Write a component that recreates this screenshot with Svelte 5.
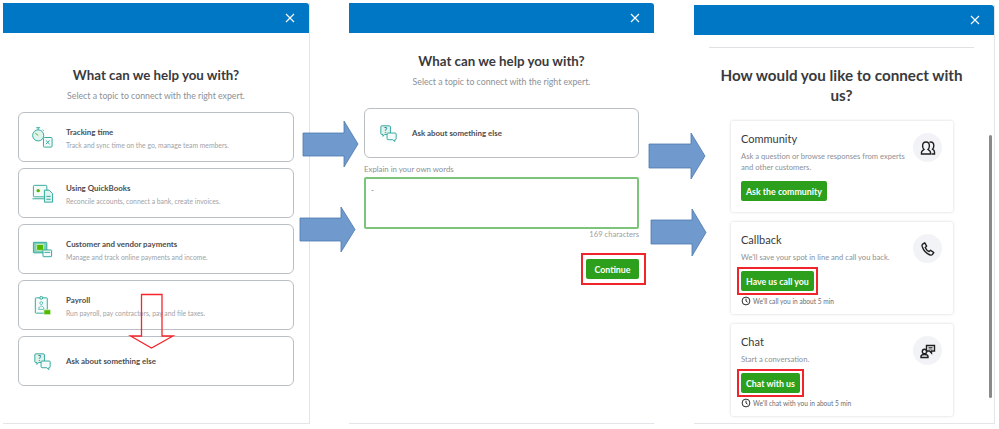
<script>
  const topics = [
    { icon: 'clock', title: 'Tracking time', desc: 'Track and sync time on the go, manage team members.' },
    { icon: 'laptop', title: 'Using QuickBooks', desc: 'Reconcile accounts, connect a bank, create invoices.' },
    { icon: 'money', title: 'Customer and vendor payments', desc: 'Manage and track online payments and income.' },
    { icon: 'payroll', title: 'Payroll', desc: 'Run payroll, pay contractors, pay and file taxes.' },
    { icon: 'ask', title: 'Ask about something else', desc: '' }
  ];

  const options = [
    { id: 'community', title: 'Community', desc: 'Ask a question or browse responses from experts and other customers.', action: 'Ask the community', hint: '', marked: false },
    { id: 'callback', title: 'Callback', desc: "We'll save your spot in line and call you back.", action: 'Have us call you', hint: "We'll call you in about 5 min", marked: true },
    { id: 'chat', title: 'Chat', desc: 'Start a conversation.', action: 'Chat with us', hint: "We'll chat with you in about 5 min", marked: true }
  ];

  // block arrows between the panels: left, head base, tip, shaft top/bottom, head top/bottom
  const arrows = [
    [303, 344, 358, 133, 156, 121, 167],
    [300, 341, 355, 218, 241, 207, 252],
    [649, 691, 705, 144, 168, 133, 179],
    [651, 692, 706, 220, 244, 209, 256]
  ];

  function arrowPoints([l, b, t, s1, s2, h1, h2]) {
    const mid = (h1 + h2) / 2;
    return `${l},${s1} ${b},${s1} ${b},${h1} ${t},${mid} ${b},${h2} ${b},${s2} ${l},${s2}`;
  }
</script>

{#snippet close()}
  <svg class="close" viewBox="0 0 10 10" aria-hidden="true">
    <path d="M1 1l8 8M9 1l-8 8" />
  </svg>
{/snippet}

{#snippet topicIcon(name)}
  <svg class="topic-icon" viewBox="0 0 24 24" aria-hidden="true">
    {#if name === 'clock'}
      <path class="line" d="M5.500 1.800h4M7.500 1.800v2.200M12 3.800l1.200 1.200" />
      <circle class="soft" cx="7.500" cy="9.800" r="5.800" />
      <path class="dark" d="M7.500 9.800L4.500 7.500" />
      <rect class="pale" x="13" y="12" width="9" height="10" rx="1" />
      <path class="line" d="M15.500 15l4 4M19.500 15l-4 4" />
    {:else if name === 'laptop'}
      <rect class="pale" x="2.500" y="3.500" width="14" height="12" rx="1" />
      <path class="line" d="M1.500 17.500h12" />
      <circle class="dot" cx="7.500" cy="9" r="1.800" />
      <path class="soft" d="M14 8.500h5l3.500 3.500V21H14z" />
      <path class="line" d="M16 15h4.500M16 18h4.500" />
    {:else if name === 'money'}
      <rect class="soft fill" x="2.500" y="4.500" width="14" height="11" rx="0.500" />
      <rect class="cash" x="6" y="6.800" width="7" height="6" />
      <rect class="pale" x="12.500" y="12.500" width="9" height="7" rx="0.500" />
      <path class="line" d="M14 15h6" />
    {:else if name === 'payroll'}
      <rect class="pale" x="4.500" y="4" width="12.500" height="16" rx="1" />
      <circle class="soft" cx="10.700" cy="4" r="1.500" />
      <circle class="line thin" cx="10.700" cy="9.500" r="1.500" />
      <path class="line thin" d="M8 16c0-4.500 5.500-4.500 5.500 0z" />
      <rect class="cash" x="13.500" y="16.500" width="7" height="5" />
    {:else}
      <path class="soft" d="M5 4h8a1 1 0 0 1 1 1v7a1 1 0 0 1-1 1H8l-1.800 2v-2H5a1 1 0 0 1-1-1V5a1 1 0 0 1 1-1z" />
      <text class="mark" x="9" y="11.500">?</text>
      <path class="pale" d="M11.500 11.500H19a1 1 0 0 1 1 1v5a1 1 0 0 1-1 1h-.5V20.500L16.500 18.500h-5a1 1 0 0 1-1-1v-5a1 1 0 0 1 1-1z" />
    {/if}
  </svg>
{/snippet}

{#snippet optionIcon(id)}
  <span class="option-icon">
    <svg viewBox="0 0 16 16" aria-hidden="true">
      {#if id === 'community'}
        <path d="M1.500 14v-1.800c0-1.500 1.300-2 2.500-2.700-1-.9-1.400-2-1.400-3.500C2.600 3.800 4 2 6 2s3.400 1.800 3.400 4c0 1.500-.4 2.600-1.400 3.500 1.200.7 2.500 1.200 2.500 2.700V14z" />
        <path d="M9.500 2.300C10 2.100 10.400 2 10.800 2c1.800 0 3 1.700 3 3.800 0 1.400-.4 2.500-1.300 3.400 1.100.6 2 1.200 2 2.800V14h-3" />
      {:else if id === 'callback'}
        <path d="M4.800 1.800L2.600 3.200c-.6.500-.7 1.300-.4 2.300 1.300 4 4.300 7.200 8 8.500 1 .3 1.800 0 2.300-.6l1.300-1.800-3.200-2.300-1.400 1.200C7.200 9.800 6 8.400 5.200 6.500l1.400-1.300z" stroke-linejoin="round" />
      {:else}
        <path d="M6.500 2.500h8v5.500h-3v2l-2-2h-3z" />
        <path d="M8.500 4.500h4M8.500 6h4" class="fine" />
        <circle cx="4.500" cy="8.500" r="2.200" />
        <path d="M1 14.500v-1c0-1.300 1.600-2 3.500-2s3.500.7 3.500 2v1z" />
      {/if}
    </svg>
  </span>
{/snippet}

{#snippet topicCard(topic)}
  <div class="topic">
    {@render topicIcon(topic.icon)}
    <div class="topic-text" class:stacked={topic.desc}>
      <span class="topic-title">{topic.title}</span>
      {#if topic.desc}<span class="topic-desc">{topic.desc}</span>{/if}
    </div>
  </div>
{/snippet}

<main class="canvas">
  <section class="panel first">
    <header class="bar">{@render close()}</header>
    <div class="body">
      <h2>What can we help you with?</h2>
      <p class="lead">Select a topic to connect with the right expert.</p>
      <div class="topics">
        {#each topics as topic}
          {@render topicCard(topic)}
        {/each}
      </div>
    </div>
  </section>

  <section class="panel second">
    <header class="bar">{@render close()}</header>
    <div class="body">
      <h2>What can we help you with?</h2>
      <p class="lead">Select a topic to connect with the right expert.</p>
      <div class="topics">{@render topicCard(topics[4])}</div>
      <span class="field-label">Explain in your own words</span>
      <div class="field">-</div>
      <span class="count">169 characters</span>
      <div class="actions"><button class="green marked continue">Continue</button></div>
    </div>
  </section>

  <section class="panel third">
    <header class="bar">{@render close()}</header>
    <div class="body">
      <hr />
      <h2>How would you like to connect with us?</h2>
      <div class="options">
        {#each options as option}
          <article class="option {option.id}">
            {@render optionIcon(option.id)}
            <h3>{option.title}</h3>
            <p>{option.desc}</p>
            <button class="green" class:marked={option.marked}>{option.action}</button>
            {#if option.hint}
              <span class="hint">
                <svg viewBox="0 0 10 10" aria-hidden="true">
                  <circle cx="5" cy="5" r="3.900" />
                  <path d="M5 2.700V5l1.600 1.200" />
                </svg>
                {option.hint}
              </span>
            {/if}
          </article>
        {/each}
      </div>
      <div class="scrollbar"></div>
    </div>
  </section>

  <svg class="overlay" viewBox="0 0 999 429" aria-hidden="true">
    {#each arrows as arrow}
      <polygon class="block" points={arrowPoints(arrow)} />
    {/each}
    <polygon class="down" points="141.500,294.500 162,294.500 162,336 173,336 151.500,348 130.500,336 141.500,336" />
  </svg>
</main>

<style>
  :global(body) {
    margin: 0;
    background: #fff;
  }

  .canvas {
    position: relative;
    width: 999px;
    height: 429px;
    overflow: hidden;
    font-family: Lato, "Liberation Sans", sans-serif;
    color: #393a3d;
  }

  .panel {
    position: absolute;
    top: 3px;
    bottom: 5px;
    display: flex;
    flex-direction: column;
    box-sizing: border-box;
    background: #fff;
    border-right: 1px solid #e3e5e8;
    border-bottom: 1px solid #e3e5e8;
  }

  .first { left: 3px; width: 307px; }
  .second { left: 349px; width: 306px; border-right-color: transparent; }
  .third { left: 694px; top: 5px; width: 301px; }

  .bar {
    display: flex;
    align-items: center;
    justify-content: flex-end;
    flex: none;
    height: 30px;
    padding-right: 14px;
    background: #0077c5;
    border-radius: 0 3px 0 0;
  }

  .close {
    width: 10px;
    height: 10px;
    fill: none;
    stroke: #fff;
    stroke-width: 1.100;
  }

  .body {
    position: relative;
    flex: 1;
    display: flex;
    flex-direction: column;
  }

  h2 {
    margin: 0;
    font-size: 13.300px;
    line-height: 20px;
    font-weight: 700;
    text-align: center;
    color: #393a3d;
  }

  .lead {
    margin: 5px 0 0;
    font-size: 8.750px;
    line-height: 12px;
    text-align: center;
    color: #8d9096;
  }

  .first .body { padding: 32px 15px 0; }
  .first .lead { margin-bottom: 10px; }

  .second .body { padding: 18px 15px 0; }
  .second .lead { margin-bottom: 20px; }

  .topics {
    display: flex;
    flex-direction: column;
    gap: 6px;
  }

  .topic {
    display: flex;
    align-items: center;
    gap: 12px;
    box-sizing: border-box;
    height: 50px;
    padding-left: 12px;
    border: 1px solid #babec5;
    border-radius: 6px;
  }

  .topic-icon {
    flex: none;
    width: 23px;
    height: 23px;
  }

  .topic-icon .soft,
  .topic-icon .pale,
  .topic-icon .line {
    stroke: #2fa79a;
    stroke-width: 1;
  }

  .topic-icon .soft { fill: #dff3ef; }
  .topic-icon .soft.fill { fill: #7fd0bb; }
  .topic-icon .pale { fill: #f3fbfa; }
  .topic-icon .line { fill: none; }
  .topic-icon .line.thin { stroke-width: 0.700; }
  .topic-icon .dark { fill: none; stroke: #53b700; stroke-width: 1; }
  .topic-icon .dot { fill: #53b700; }
  .topic-icon .cash { fill: #53b700; stroke: #d5f0c3; stroke-width: 0.800; }
  .topic-icon .mark {
    font-size: 7px;
    font-weight: 700;
    text-anchor: middle;
    fill: #23756d;
  }

  .topic-text {
    display: flex;
    flex-direction: column;
    gap: 2px;
  }

  .topic-text.stacked { padding-top: 2px; }

  .topic-title {
    font-size: 7.900px;
    line-height: 11px;
    font-weight: 700;
    color: #4c4d50;
  }

  .topic-desc {
    font-size: 6.800px;
    line-height: 10px;
    color: #a0a3a8;
  }

  .field-label {
    margin-top: 6px;
    font-size: 7.800px;
    line-height: 10px;
    color: #8d9096;
  }

  .field {
    box-sizing: border-box;
    height: 52px;
    margin-top: 3px;
    padding: 5px 5px;
    border: 2px solid #7cc47a;
    border-radius: 2px;
    font-size: 8px;
    line-height: 12px;
    color: #6b6c72;
  }

  .count {
    font-size: 7.600px;
    line-height: 10px;
    text-align: right;
    color: #9a9da3;
  }

  .actions {
    display: flex;
    justify-content: flex-end;
    margin-top: 20px;
  }

  .green {
    position: relative;
    display: block;
    box-sizing: border-box;
    height: 20px;
    padding: 0 5px;
    border: 0;
    border-radius: 2px;
    background: #2ca01c;
    color: #fff;
    font: 700 8.800px Lato, "Liberation Sans", sans-serif;
  }

  .continue {
    width: 53px;
  }

  /* square annotation box drawn over the screenshot */
  .marked::after {
    content: "";
    position: absolute;
    inset: -4px -4.500px;
    border: 2px solid #f0242a;
  }

  .continue.marked::after {
    inset: -6px -7px -6px -5px;
  }

  .third .body { padding: 12px 20px 0 15px; }

  hr {
    width: 100%;
    height: 1px;
    margin: 0;
    border: 0;
    background: #dfe1e4;
  }

  .third h2 {
    margin: 17px 0 0;
    padding: 0;
    font-size: 15.200px;
    line-height: 20px;
  }

  .options {
    display: flex;
    flex-direction: column;
    gap: 10px;
    width: 222px;
    margin: 16px 0 0 22px;
  }

  .option {
    position: relative;
    box-sizing: border-box;
    height: 92px;
    padding: 10px 10px 0;
    border-radius: 2px;
    box-shadow: 0 0 3px rgba(0, 0, 0, 0.18);
  }

  .option.community { height: 91px; }

  .option h3 {
    margin: 0;
    font-size: 11px;
    line-height: 16px;
    font-weight: 400;
    color: #393a3d;
  }

  .option p {
    width: 172px;
    margin: 4px 0 8px;
    font-size: 7.600px;
    line-height: 11px;
    color: #8d9096;
  }

  .option-icon {
    position: absolute;
    top: 12px;
    right: 11px;
    display: flex;
    align-items: center;
    justify-content: center;
    width: 29px;
    height: 29px;
    border-radius: 50%;
    background: #f2f3f6;
  }

  .option-icon svg {
    width: 16px;
    height: 16px;
    fill: none;
    stroke: #1f2022;
    stroke-width: 1.400;
  }

  .option-icon .fine { stroke-width: 0.800; }

  .hint {
    display: flex;
    align-items: center;
    gap: 2px;
    margin-top: 5px;
    font-size: 6.600px;
    line-height: 10px;
    color: #6b6c72;
  }

  .hint svg {
    width: 10px;
    height: 10px;
    fill: none;
    stroke: #2b2c2e;
    stroke-width: 1;
  }

  .scrollbar {
    position: absolute;
    top: 100px;
    right: 2px;
    width: 3px;
    height: 263px;
    border-radius: 2px;
    background: #8a8a8a;
  }

  .overlay {
    position: absolute;
    inset: 0;
    width: 999px;
    height: 429px;
    pointer-events: none;
  }

  .block {
    fill: #7099cd;
    stroke: #4c78ad;
    stroke-width: 0.800;
  }

  .down {
    fill: none;
    stroke: #f5252b;
    stroke-width: 1.300;
  }
</style>
